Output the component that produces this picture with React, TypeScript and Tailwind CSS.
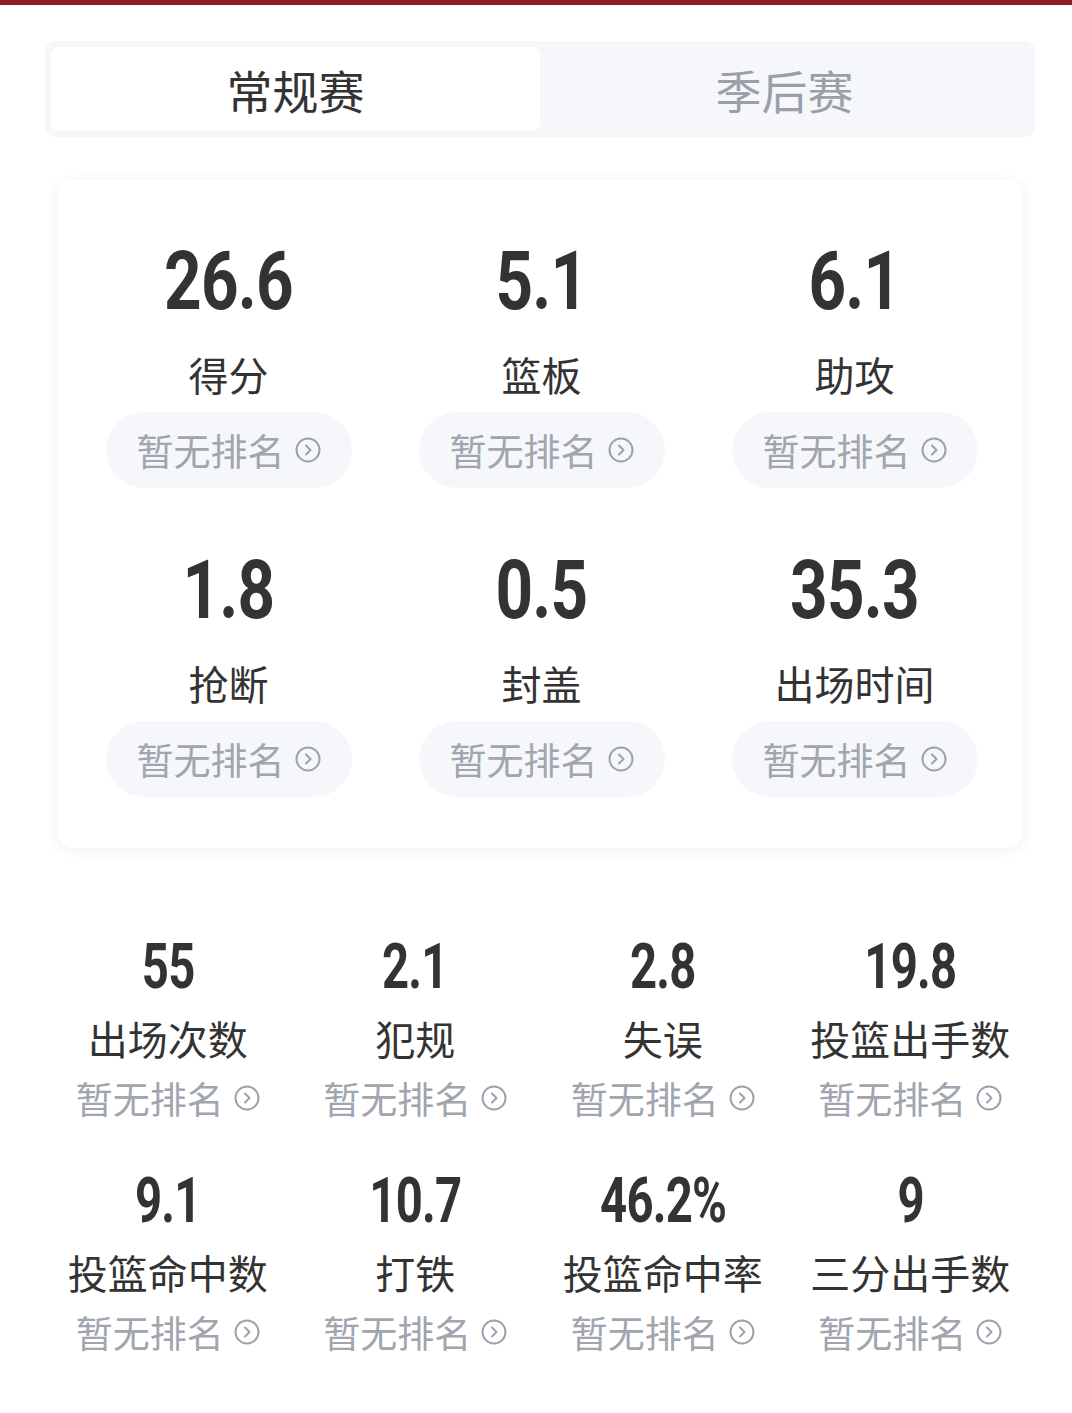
import React from "react";

const cjk = '"Noto Sans CJK SC", "Noto Sans", sans-serif';

function RankIcon({ size }: { size: number }) {
  return (
    <svg width={size} height={size} viewBox="0 0 26 26" fill="none" className="shrink-0">
      <circle cx="13" cy="13" r="11.5" stroke="#9ca1aa" strokeWidth="2" />
      <path d="M11 8.5 L15.5 13 L11 17.5" stroke="#9ca1aa" strokeWidth="2" strokeLinecap="round" strokeLinejoin="round" />
    </svg>
  );
}

const top = [
  { v: "26.6", l: "得分" },
  { v: "5.1", l: "篮板" },
  { v: "6.1", l: "助攻" },
  { v: "1.8", l: "抢断" },
  { v: "0.5", l: "封盖" },
  { v: "35.3", l: "出场时间" },
];

const bottom = [
  { v: "55", l: "出场次数" },
  { v: "2.1", l: "犯规" },
  { v: "2.8", l: "失误" },
  { v: "19.8", l: "投篮出手数" },
  { v: "9.1", l: "投篮命中数" },
  { v: "10.7", l: "打铁" },
  { v: "46.2%", l: "投篮命中率" },
  { v: "9", l: "三分出手数" },
];

export default function App() {
  return (
    <div className="w-[1072px] h-[1413px] bg-white overflow-hidden" style={{ fontFamily: cjk }}>
      <div className="h-[5px] bg-[#931b2c]" />
      <div className="pt-[36px] px-[45px] w-[1072px]">
        <div className="h-[96px] w-[990px] bg-[#f5f7fa] rounded-[10px] p-[6px] flex">
          <div className="flex-1 bg-white rounded-[8px] flex items-center justify-center text-[46px] text-[#333333] leading-none">
            常规赛
          </div>
          <div className="flex-1 flex items-center justify-center text-[46px] text-[#9a9fa8] leading-none">
            季后赛
          </div>
        </div>
      </div>

      <div className="ml-[58px] mt-[43px] w-[964px] bg-white rounded-[14px] shadow-[0_2px_14px_rgba(0,0,0,0.07)] pt-[60px] pb-[51px] pl-[14px] pr-[11px]">
        <div className="grid grid-cols-3 gap-y-[61px]">
          {top.map((s) => (
            <div key={s.l} className="flex flex-col items-center">
              <div
                className="h-[82px] flex items-center justify-center text-[82px] leading-none font-bold text-[#333333] scale-x-[0.8] tracking-[-1px]"
                style={{ fontFamily: "Roboto, sans-serif" }}
              >
                {s.v}
              </div>
              <div className="mt-[28px] h-[48px] flex items-center text-[40px] leading-none text-[#333333]">{s.l}</div>
              <div className="mt-[14px] h-[76px] w-[246px] rounded-full bg-[#f5f7fa] flex items-center justify-center gap-[10px]">
                <span className="text-[37px] leading-none text-[#a0a5ae]">暂无排名</span>
                <RankIcon size={26} />
              </div>
            </div>
          ))}
        </div>
      </div>

      <div className="ml-[44px] mt-[87px] w-[990px] grid grid-cols-4 gap-y-[48px]">
        {bottom.map((s) => (
          <div key={s.l} className="flex flex-col items-center">
            <div
              className="h-[63px] flex items-center justify-center text-[63px] leading-none font-bold text-[#333333] scale-x-[0.75] tracking-[-1px]"
              style={{ fontFamily: "Roboto, sans-serif" }}
            >
              {s.v}
            </div>
            <div className="mt-[16px] h-[48px] flex items-center text-[40px] leading-none text-[#333333] whitespace-nowrap">{s.l}</div>
            <div className="mt-[13px] h-[46px] flex items-center justify-center gap-[10px]">
              <span className="text-[37px] leading-none text-[#a0a5ae]">暂无排名</span>
              <RankIcon size={26} />
            </div>
          </div>
        ))}
      </div>
    </div>
  );
}
